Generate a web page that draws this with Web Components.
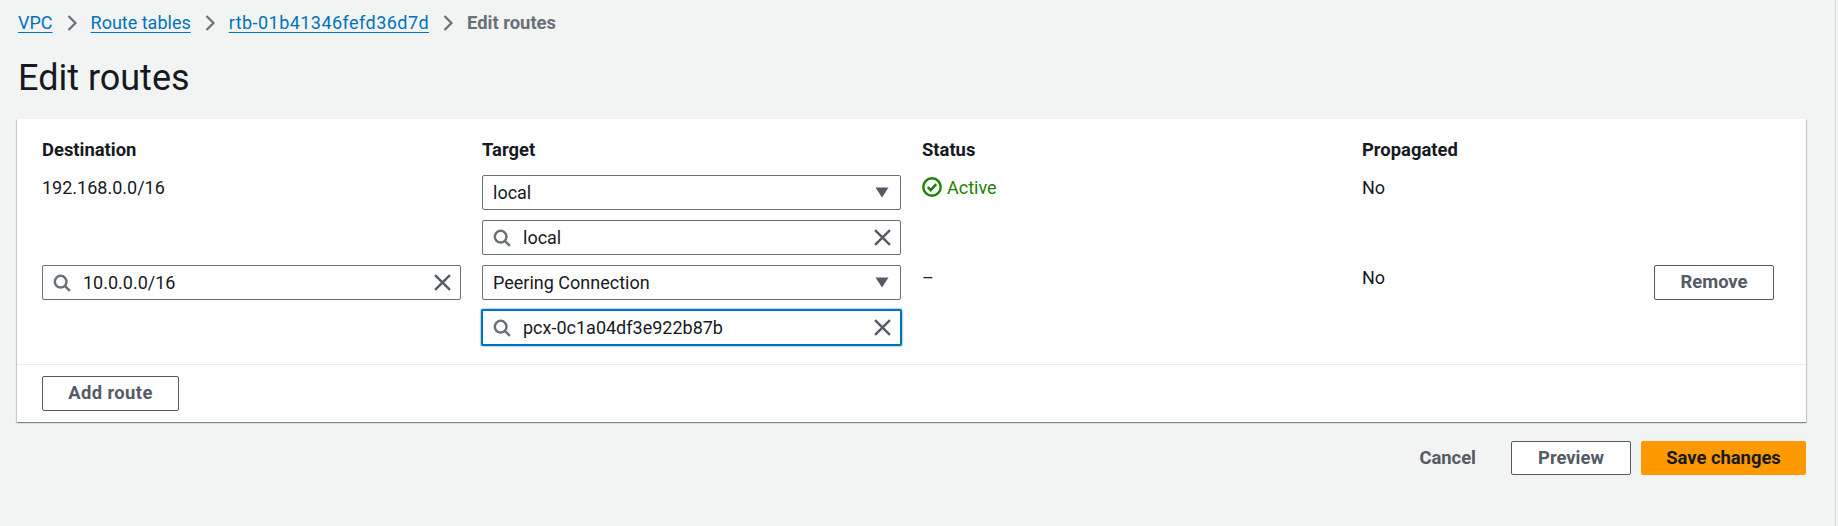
<!DOCTYPE html>
<html>
<head>
<meta charset="utf-8">
<style>
  html { height: 100%; background: #f2f3f3; }
  body { margin: 0 2px 0 0; height: 100%; border-right: 1px solid #d9dcdc; background: #f2f3f3; font-family: Roboto, sans-serif; font-size: 18px; color: #16191f; overflow: hidden; }
</style>
</head>
<body>
<edit-routes-page>
  <bread-crumbs slot="crumbs">
    <crumb-link>VPC</crumb-link>
    <crumb-link>Route tables</crumb-link>
    <crumb-link style="letter-spacing:.45px">rtb-01b41346fefd36d7d</crumb-link>
    <crumb-link current>Edit routes</crumb-link>
  </bread-crumbs>
  <routes-card>
    <route-grid>
      <col-head>Destination</col-head>
      <col-head>Target</col-head>
      <col-head>Status</col-head>
      <col-head>Propagated</col-head>
      <span></span>

      <plain-cell>192.168.0.0/16</plain-cell>
      <target-stack>
        <select-box>local</select-box>
        <search-box>local</search-box>
      </target-stack>
      <status-active>Active</status-active>
      <plain-cell>No</plain-cell>
      <span></span>

      <div><search-box>10.0.0.0/16</search-box></div>
      <target-stack>
        <select-box>Peering Connection</select-box>
        <search-box focused>pcx-0c1a04df3e922b87b</search-box>
      </target-stack>
      <plain-cell>–</plain-cell>
      <plain-cell>No</plain-cell>
      <div style="display:flex;justify-content:flex-end"><aws-button style="width:120px">Remove</aws-button></div>
    </route-grid>
    <aws-button slot="footer" style="width:137px;letter-spacing:.4px">Add route</aws-button>
  </routes-card>
  <form-actions>
    <aws-button variant="link">Cancel</aws-button>
    <aws-button style="width:120px">Preview</aws-button>
    <aws-button variant="primary" style="width:165px">Save changes</aws-button>
  </form-actions>
</edit-routes-page>

<script>
const SEARCH_ICON = `<svg width="18" height="18" viewBox="0 0 16 16" fill="none" stroke="#687078" stroke-width="2.2"><circle cx="6.8" cy="6.8" r="5.2"/><path d="M10.5 10.5 15 15"/></svg>`;
const CLOSE_ICON = `<svg width="17" height="17" viewBox="0 0 16 16" fill="none" stroke="#545b64" stroke-width="2.3"><path d="M1 1l14 14M15 1 1 15"/></svg>`;
const CARET_ICON = `<svg width="14" height="11" viewBox="0 0 14 11"><path d="M0.5 0.5h13L7 10.5z" fill="#545b64"/></svg>`;
const CHEVRON_ICON = `<svg width="10" height="18" viewBox="0 0 10 18" fill="none" stroke="#687078" stroke-width="2.2"><path d="M1.5 2l7 7-7 7"/></svg>`;
const CHECK_ICON = `<svg width="20" height="20" viewBox="0 0 20 20" fill="none" stroke="#1d8102" stroke-width="2.4"><circle cx="10" cy="10" r="8.7"/><path d="M5.8 10.2l3 3 5.4-6" stroke-width="2.6"/></svg>`;

function define(name, css, html, init) {
  customElements.define(name, class extends HTMLElement {
    constructor() {
      super();
      const template = document.createElement('template');
      template.innerHTML = `<style>${css}</style>${html}`;
      this.attachShadow({ mode: 'open' }).appendChild(template.content.cloneNode(true));
    }
    connectedCallback() {
      if (init) init(this);
    }
  });
}

define('edit-routes-page', `
  :host { display: block; padding: 0 29px 0 17px; box-sizing: border-box; }
  h1 { margin: 0; padding: 11px 0 19px 1px; font-size: 36px; line-height: 44px; font-weight: 400; color: #16191f; }
`, `
  <slot name="crumbs"></slot>
  <h1>Edit routes</h1>
  <slot></slot>
`);

define('bread-crumbs', `
  :host { display: flex; align-items: center; height: 45px; padding-left: 1px; gap: 14px; }
`, `<slot></slot>`);

define('crumb-link', `
  :host { display: flex; align-items: center; gap: 14px; font-size: 18px; color: #0073bb; }
  .sep { display: flex; }
  a { color: inherit; text-decoration: underline; text-underline-offset: 3px; }
  :host([current]) { color: #687078; font-weight: 700; font-size: 18.4px; }
  :host([current]) a { text-decoration: none; }
`, `<span class="sep" hidden>${CHEVRON_ICON}</span><a><slot></slot></a>`, (el) => {
  const sep = el.shadowRoot.querySelector('.sep');
  sep.style.display = el.previousElementSibling ? 'flex' : 'none';
});

define('routes-card', `
  :host { display: block; background: #fff; box-shadow: 0 1px 1px 0 rgba(0,28,36,.3), 1px 1px 1px 0 rgba(0,28,36,.15), -1px 1px 1px 0 rgba(0,28,36,.15); }
  .body { padding: 20px 32px 19px 25px; }
  .foot { padding: 11px 25px; border-top: 1px solid #eaeded; display: flex; }
`, `
  <div class="body"><slot></slot></div>
  <div class="foot"><slot name="footer"></slot></div>
`);

define('route-grid', `
  :host { display: grid; grid-template-columns: 440px 440px 440px 1fr 120px; row-gap: 10px; }
`, `<slot></slot>`);

define('col-head', `
  :host { display: block; font-weight: 700; font-size: 18.4px; line-height: 22px; color: #16191f; margin: 0 21px 4px 0; }
`, `<slot></slot>`);

define('plain-cell', `
  :host { display: block; font-size: 18px; line-height: 22px; padding-top: 2px; color: #16191f; }
`, `<slot></slot>`);

define('target-stack', `
  :host { display: flex; flex-direction: column; gap: 10px; margin-right: 21px; }
`, `<slot></slot>`);

define('select-box', `
  :host { display: flex; align-items: center; justify-content: space-between; height: 35px; box-sizing: border-box; border: 1px solid #687078; border-radius: 2px; padding: 0 11px 0 10px; background: #fff; color: #16191f; }
`, `<span><slot></slot></span>${CARET_ICON}`);

define('search-box', `
  :host { display: flex; align-items: center; height: 35px; box-sizing: border-box; border: 1px solid #687078; border-radius: 2px; padding: 0 9px 0 10px; background: #fff; color: #16191f; }
  :host([focused]) { border: 2px solid #0073bb; height: 37px; margin: -1px; box-shadow: 0 0 2px #0073bb; }
  span { flex: 1; padding-left: 12px; }
  svg { display: block; }
`, `${SEARCH_ICON}<span><slot></slot></span>${CLOSE_ICON}`, (el) => {
  if (!el.closest('target-stack')) el.style.marginRight = '21px';
});

define('status-active', `
  :host { display: flex; align-items: center; gap: 5px; height: 24px; color: #1d8102; font-size: 18px; }
`, `${CHECK_ICON}<slot></slot>`);

define('aws-button', `
  :host { display: inline-flex; align-items: center; justify-content: center; height: 35px; box-sizing: border-box; border: 1px solid #545b64; border-radius: 2px; padding-bottom: 2px; background: #fff; color: #545b64; font-weight: 700; font-size: 18.4px; }
  :host([variant=primary]) { background: #ff9900; border-color: #ff9900; color: #16191f; }
  :host([variant=link]) { background: none; border-color: transparent; padding: 0 24px 2px 26px; }
`, `<slot></slot>`);

define('form-actions', `
  :host { display: flex; justify-content: flex-end; gap: 10px; margin-top: 19px; }
  ::slotted(aws-button) { height: 34px; }
`, `<slot></slot>`);
</script>
</body>
</html>
